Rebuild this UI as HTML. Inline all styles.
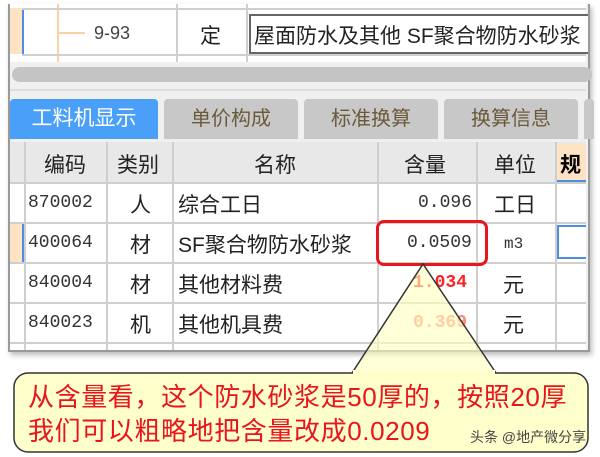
<!DOCTYPE html><html><head><meta charset="utf-8"><style>
body{margin:0;width:600px;height:457px;background:#fff;position:relative;overflow:hidden;font-family:"Liberation Sans","Noto Sans CJK SC",sans-serif}
.a{position:absolute}
.win{left:8px;top:4px;width:578px;height:346px;border:2px solid #9a9a9a;border-top:none;background:#f0f0f0;box-shadow:2px 3px 5px #bbb;overflow:hidden}
.t{font-size:21px;color:#222;white-space:nowrap}
.c{font-family:"Liberation Mono","Noto Sans CJK SC",monospace;font-size:18px;color:#333}
.vl{background:#cfcfcf;width:2px}
.hl{background:#cfcfcf;height:2px}
.tab{top:99px;height:40px;background:#c8c8c8;border-radius:4px 4px 0 0;font-size:20px;color:#6b5a3a;text-align:center;line-height:40px}
</style></head><body>
<div class="a win"></div>
<div class="a" style="left:10px;top:4px;width:576px;height:58px;background:#fff"></div>
<div class="a" style="left:10px;top:8px;width:12px;height:46px;background:#fde3c4"></div>
<div class="a" style="left:22px;top:8px;width:2px;height:46px;background:#4a90e2"></div>
<div class="a" style="left:57px;top:4px;width:2px;height:58px;background:#fcd3a0"></div>
<div class="a" style="left:57px;top:32px;width:28px;height:2px;background:#fcd3a0"></div>
<div class="a vl" style="left:176px;top:4px;height:58px"></div>
<div class="a vl" style="left:246px;top:4px;height:58px"></div>
<div class="a hl" style="left:22px;top:8px;width:564px"></div>
<div class="a hl" style="left:22px;top:54px;width:564px"></div>
<div class="a t" style="left:94px;top:23px;font-size:18px;color:#444">9-93</div>
<div class="a t" style="left:200px;top:20px">定</div>
<div class="a" style="left:249px;top:14px;width:337px;height:36px;border:2px solid #666;border-right:none;background:#fff"></div>
<div class="a t" style="left:254px;top:20px;font-size:21px">屋面防水及其他 SF聚合物防水砂浆</div>
<div class="a" style="left:10px;top:64px;width:576px;height:24px;background:#f0f0f0"></div>
<div class="a" style="left:12px;top:67px;width:580px;height:15px;background:#c4c4c4;border-radius:8px"></div>
<div class="a" style="left:10px;top:89px;width:576px;height:2px;background:#ddd"></div>
<div class="a tab" style="left:10px;width:148px;background:#4aa0f8;color:#fff;font-size:21px">工料机显示</div>
<div class="a tab" style="left:164px;width:134px">单价构成</div>
<div class="a tab" style="left:304px;width:134px">标准换算</div>
<div class="a tab" style="left:444px;width:134px">换算信息</div>
<div class="a tab" style="left:584px;width:10px"></div>
<div class="a" style="left:10px;top:142px;width:576px;height:208px;background:#fff"></div>
<div class="a" style="left:10px;top:142px;width:576px;height:40px;background:#e8e8e8"></div>
<div class="a" style="left:555px;top:144px;width:31px;height:36px;background:#fde3c4"></div>
<div class="a" style="left:555px;top:180px;width:31px;height:3px;background:#4a90e2"></div>
<div class="a t" style="left:560px;top:149px;font-weight:bold;color:#000">规</div>
<div class="a" style="left:10px;top:222px;width:12px;height:40px;background:#fde3c4"></div>
<div class="a" style="left:22px;top:222px;width:2px;height:40px;background:#4a90e2"></div>
<div class="a" style="left:557px;top:225px;width:29px;height:34px;border:2px solid #4a90e2;border-right:none;box-sizing:border-box"></div>
<div class="a vl" style="left:24px;top:142px;height:208px"></div>
<div class="a vl" style="left:106px;top:142px;height:208px"></div>
<div class="a vl" style="left:172px;top:142px;height:208px"></div>
<div class="a vl" style="left:377px;top:142px;height:208px"></div>
<div class="a vl" style="left:476px;top:142px;height:208px"></div>
<div class="a vl" style="left:555px;top:142px;height:208px"></div>
<div class="a hl" style="left:10px;top:182px;width:576px"></div>
<div class="a hl" style="left:10px;top:222px;width:576px"></div>
<div class="a hl" style="left:10px;top:262px;width:576px"></div>
<div class="a hl" style="left:10px;top:302px;width:576px"></div>
<div class="a hl" style="left:10px;top:342px;width:576px"></div>
<div class="a t" style="left:44px;top:149px">编码</div>
<div class="a t" style="left:117px;top:149px">类别</div>
<div class="a t" style="left:254px;top:149px">名称</div>
<div class="a t" style="left:404px;top:149px">含量</div>
<div class="a t" style="left:494px;top:149px">单位</div>
<div class="a c" style="left:28px;top:193px">870002</div>
<div class="a t" style="left:130px;top:189px">人</div>
<div class="a t" style="left:178px;top:189px">综合工日</div>
<div class="a c" style="left:418px;top:193px">0.096</div>
<div class="a t" style="left:494px;top:189px">工日</div>
<div class="a c" style="left:28px;top:233px">400064</div>
<div class="a t" style="left:130px;top:229px">材</div>
<div class="a t" style="left:178px;top:229px">SF聚合物防水砂浆</div>
<div class="a c" style="left:407px;top:233px">0.0509</div>
<div class="a c" style="left:504px;top:235px;font-size:16px">m3</div>
<div class="a c" style="left:28px;top:273px">840004</div>
<div class="a t" style="left:130px;top:269px">材</div>
<div class="a t" style="left:178px;top:269px">其他材料费</div>
<div class="a c" style="left:413px;top:273px;color:#f22;font-weight:bold">1.034</div>
<div class="a t" style="left:503px;top:269px">元</div>
<div class="a c" style="left:28px;top:313px">840023</div>
<div class="a t" style="left:130px;top:309px">机</div>
<div class="a t" style="left:178px;top:309px">其他机具费</div>
<div class="a c" style="left:413px;top:313px;color:#f87;font-weight:bold">0.369</div>
<div class="a t" style="left:503px;top:309px">元</div>
<div class="a" style="left:376px;top:220px;width:112px;height:46px;border:3px solid #e8141e;border-radius:8px;box-sizing:border-box"></div>
<svg class="a" style="left:0;top:0" width="600" height="457">
<path d="M352,373 L423,264 L496,373" fill="rgba(255,255,190,0.6)" stroke="#333" stroke-width="1.5"/>
<rect x="14" y="373" width="574" height="79" rx="14" fill="#ffffcc" stroke="#333" stroke-width="1.5"/>
<rect x="353" y="370" width="142" height="5" fill="#ffffcc"/>
</svg>
<div class="a" style="left:28px;top:380px;font-size:26px;color:#e8141e;white-space:nowrap;line-height:34px;letter-spacing:0.6px">从含量看，这个防水砂浆是50厚的，按照20厚<br>我们可以粗略地把含量改成0.0209</div>
<div class="a" style="left:470px;top:427px;font-size:14px;color:#444;white-space:nowrap">头条 @地产微分享</div>
</body></html>
